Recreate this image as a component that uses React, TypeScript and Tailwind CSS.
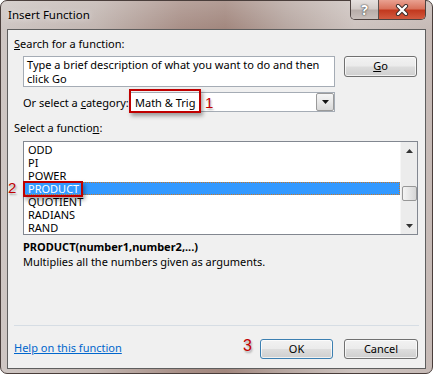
import React from "react";

const items = ["ODD", "PI", "POWER", "PRODUCT", "QUOTIENT", "RADIANS", "RAND"];

function Btn({ children, w, def }: { children: React.ReactNode; w: string; def?: boolean }) {
  return (
    <div
      className={`${w} h-full rounded-[3px] border ${
        def ? "border-[#3c7fb1]" : "border-[#707070]"
      } bg-[linear-gradient(180deg,#f2f2f2_0%,#ebebeb_48%,#dddddd_52%,#cfcfcf_100%)] flex items-center justify-center shadow-[inset_0_0_0_1px_rgba(255,255,255,0.7)] text-[11px] text-black`}
    >
      {children}
    </div>
  );
}

export default function App() {
  return (
    <div className="w-[433px] h-[375px] bg-white font-['Noto_Sans',sans-serif] text-[11px] text-black">
      <div className="w-[433px] h-[374px] rounded-[7px] border border-[#4a3e3b] flex flex-col bg-[linear-gradient(180deg,rgba(255,255,255,0.18)_0px,rgba(255,255,255,0)_28px),linear-gradient(90deg,#cec6c3_0%,#c2b6b1_22%,#a88f87_42%,#a2877e_52%,#b7a7a1_66%,#cdc3bf_82%,#c6bab6_100%)]">
        {/* title bar */}
        <div className="h-[28px] flex items-start shrink-0">
          <div className="pl-[7px] pt-[6px] text-[11.5px] leading-[16px] text-black [text-shadow:0_0_6px_rgba(255,255,255,0.9)]">
            Insert Function
          </div>
          <div className="ml-auto mr-[6px] -mt-[1px] flex h-[20px] rounded-b-[5px] border border-t-0 border-[#4d4240] overflow-hidden">
            <div className="w-[28px] h-full bg-[linear-gradient(180deg,#e6e1df_0%,#d3cbc8_45%,#b8ada9_55%,#c9bfbb_100%)] border-r border-[#5a4f4c] flex items-center justify-center">
              <span className="text-[14px] leading-[14px] font-bold text-white [text-shadow:0_0_1px_#555,0_0_1px_#555,0_0_2px_#666]">?</span>
            </div>
            <div className="w-[46px] h-full bg-[linear-gradient(180deg,#e9a191_0%,#d9735d_45%,#c2391f_55%,#d25a3f_100%)] flex items-center justify-center">
              <svg width="14" height="12" viewBox="0 0 14 12">
                <path d="M3 2 L11 10 M11 2 L3 10" stroke="#3a2a28" strokeWidth="4.2" strokeLinecap="round" />
                <path d="M3 2 L11 10 M11 2 L3 10" stroke="#ffffff" strokeWidth="2.4" strokeLinecap="round" />
              </svg>
            </div>
          </div>
        </div>

        {/* client area */}
        <div className="mx-[6px] mb-[4px] flex-1 border border-[#5e5e5e] bg-[#f0f0f0] flex flex-col">
          <div className="pl-[6px] pt-[6px] leading-[15px]">
            <u>S</u>earch for a function:
          </div>

          <div className="mt-[5px] ml-[15px] flex items-start">
            <div className="w-[312px] h-[31px] border border-[#a5acb5] bg-white pl-[3px] pt-[1px] leading-[14px]">
              Type a brief description of what you want to do and then
              <br />
              click Go
            </div>
            <div className="ml-[9px] h-[21px]">
              <Btn w="w-[73px]">
                <span>
                  <u>G</u>o
                </span>
              </Btn>
            </div>
          </div>

          <div className="mt-[5px] ml-[15px] flex items-center h-[20px]">
            <div className="w-[107px] leading-[15px]">
              Or select a <u>c</u>ategory:
            </div>
            <div className="relative w-[205px] h-[20px] border border-[#a5acb5] bg-white flex items-center">
              <span className="pl-[4px] leading-[15px]">Math &amp; Trig</span>
              <div className="ml-auto mr-[0px] w-[18px] h-[18px] rounded-[2px] border border-[#9a9a9a] bg-[linear-gradient(180deg,#f6f6f6_0%,#e8e8e8_50%,#d8d8d8_100%)] flex items-center justify-center">
                <svg width="7" height="4" viewBox="0 0 7 4">
                  <path d="M0 0 L7 0 L3.5 4 Z" fill="#111" />
                </svg>
              </div>
              <div className="absolute -left-[2px] -top-[4px] w-[72px] h-[24px] border-2 border-[#c00000] shadow-[2px_3px_4px_rgba(0,0,0,0.35)]" />
              <div className="absolute left-[74px] top-[1px] text-[15px] leading-[18px] text-[#c00000] font-['Liberation_Sans',sans-serif] [text-shadow:1px_2px_2px_rgba(0,0,0,0.3)]">
                1
              </div>
            </div>
          </div>

          <div className="mt-[8px] pl-[6px] leading-[15px]">
            Select a functio<u>n</u>:
          </div>

          <div className="relative mt-[6px] ml-[15px] w-[395px] h-[94px]">
            <div className="w-full h-full border border-[#828790] bg-white flex overflow-hidden">
              <div className="flex-1 pt-[1px]">
                {items.map((it) =>
                  it === "PRODUCT" ? (
                    <div
                      key={it}
                      className="h-[13px] leading-[12px] pl-[3px] bg-[#3399ff] text-white border border-dotted border-[#c8782a]"
                    >
                      {it}
                    </div>
                  ) : (
                    <div key={it} className="h-[13px] leading-[13px] pl-[4px]">
                      {it}
                    </div>
                  )
                )}
              </div>
              <div className="w-[17px] h-full bg-[#ececec] border-l border-[#f6f6f6] flex flex-col items-center">
                <div className="h-[17px] flex items-center justify-center">
                  <svg width="7" height="4" viewBox="0 0 7 4">
                    <path d="M0 4 L7 4 L3.5 0 Z" fill="#333" />
                  </svg>
                </div>
                <div className="h-[27px]" />
                <div className="w-[15px] h-[15px] rounded-[2px] border border-[#979797] bg-[linear-gradient(90deg,#f4f4f4_0%,#e6e6e6_50%,#d6d6d6_100%)]" />
                <div className="flex-1" />
                <div className="h-[17px] flex items-center justify-center">
                  <svg width="7" height="4" viewBox="0 0 7 4">
                    <path d="M0 0 L7 0 L3.5 4 Z" fill="#333" />
                  </svg>
                </div>
              </div>
            </div>
            <div className="absolute left-0 top-[40px] w-[60px] h-[16px] border-2 border-[#c00000] shadow-[2px_3px_4px_rgba(0,0,0,0.35)]" />
            <div className="absolute -left-[15px] top-[38px] text-[15px] leading-[18px] text-[#c00000] font-['Liberation_Sans',sans-serif] [text-shadow:1px_2px_2px_rgba(0,0,0,0.3)]">
              2
            </div>
          </div>

          <div className="mt-[4px] ml-[15px] leading-[15px] font-bold">PRODUCT(number1,number2,...)</div>
          <div className="ml-[15px] leading-[15px]">Multiplies all the numbers given as arguments.</div>

          <div className="flex-1" />

          <div className="mx-[6px] h-[1px] bg-[#d6dde4]" />

          <div className="mt-[13px] mb-[9px] h-[20px] flex items-start pl-[6px] pr-[7px]">
            <div className="mt-[1px] leading-[15px] text-[#0066cc] underline">Help on this function</div>
            <div className="ml-auto -mt-[3px] mr-[8px] text-[16px] leading-[20px] text-[#c00000] font-['Liberation_Sans',sans-serif] [text-shadow:1px_2px_2px_rgba(0,0,0,0.3)]">
              3
            </div>
            <Btn w="w-[73px]" def>
              OK
            </Btn>
            <div className="ml-[11px] h-full">
              <Btn w="w-[74px]">Cancel</Btn>
            </div>
          </div>
        </div>
      </div>
    </div>
  );
}
